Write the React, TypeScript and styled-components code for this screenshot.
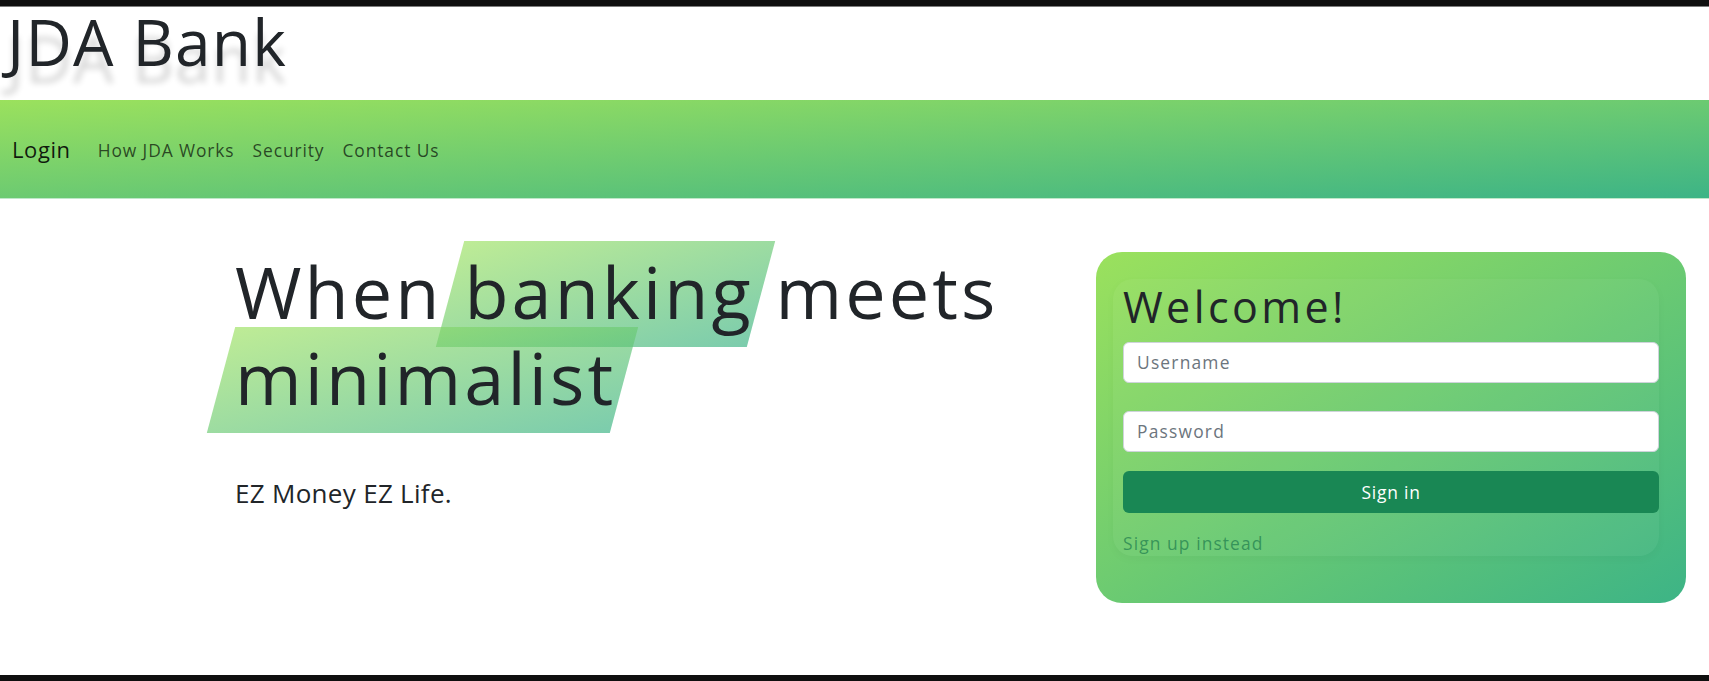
import React from "react";
import styled, { createGlobalStyle } from "styled-components";

const GlobalStyle = createGlobalStyle`
  html, body { margin: 0; padding: 0; background: #fff; }
  body {
    font-family: "Open Sans", "Noto Sans", sans-serif;
    color: #212529;
    -webkit-font-smoothing: antialiased;
  }
  *, *::before, *::after { box-sizing: border-box; }
`;

const BRAND_GRADIENT = "linear-gradient(to bottom right, #9be15d, #3db486)";

const Page = styled.div`
  display: flex;
  flex-direction: column;
  height: 681px;
  overflow: hidden;
  border-top: 6px solid #0f0f0f;
  border-bottom: 6px solid #0f0f0f;
`;

const Header = styled.header`
  height: 94px;
  border-top: 1px solid #7d7d7d;
  padding: 3px 0 0 7px;
  flex: 0 0 auto;
`;

const Title = styled.h1`
  margin: 0;
  font-size: 64px;
  font-weight: 400;
  line-height: 1;
  letter-spacing: 1.2px;
  color: #212529;
  text-shadow: 0 17px 6px rgba(0, 0, 0, 0.16);
`;

const NavBar = styled.nav`
  flex: 0 0 auto;
  height: 99px;
  display: flex;
  align-items: center;
  padding: 0 0 0 12px;
  background: ${BRAND_GRADIENT};
  border-bottom: 1px solid #bfe8c9;
`;

const Brand = styled.a`
  font-size: 22px;
  letter-spacing: 0.6px;
  color: rgba(0, 0, 0, 0.88);
  text-decoration: none;
  margin-right: 27px;
  padding-bottom: 1px;
`;

const NavLinks = styled.div`
  display: flex;
  gap: 18px;
`;

const NavLink = styled.a`
  font-size: 17.4px;
  letter-spacing: 0.9px;
  color: rgba(0, 0, 0, 0.68);
  text-decoration: none;
  padding-top: 1px;
`;

const Main = styled.main`
  flex: 1 1 auto;
  display: flex;
  justify-content: space-between;
  align-items: flex-start;
  padding: 49px 23px 0 235px;
`;

const Hero = styled.section`
  flex: 0 0 auto;
`;

const Headline = styled.h2`
  position: relative;
  z-index: 0;
  margin: 0;
  font-size: 72px;
  font-weight: 400;
  line-height: 1.2;
  letter-spacing: 3.1px;
  white-space: nowrap;
  color: #212529;
`;

const Mark = styled.span<{ $left: number; $right: number }>`
  position: relative;
  &::before {
    content: "";
    position: absolute;
    left: ${(p) => -p.$left}px;
    right: ${(p) => -p.$right}px;
    top: -1px;
    bottom: -7px;
    transform: skewX(-15deg);
    background: linear-gradient(
      to bottom right,
      rgba(155, 225, 93, 0.65),
      rgba(61, 180, 134, 0.68)
    );
    z-index: -1;
  }
`;

const Lead = styled.p`
  margin: 53px 0 0;
  font-size: 26px;
  line-height: 1.5;
  font-weight: 400;
  letter-spacing: 0.3px;
  color: #212529;
`;

const Card = styled.section`
  flex: 0 0 auto;
  width: 590px;
  height: 351px;
  margin-top: 4px;
  border-radius: 26px;
  background: ${BRAND_GRADIENT};
  padding: 27px 27px 0 17px;
`;

const CardBody = styled.form`
  display: flex;
  flex-direction: column;
  padding: 0 0 0 10px;
  border-radius: 20px;
  background: rgba(255, 255, 255, 0.04);
  box-shadow: 0 3px 10px rgba(0, 0, 0, 0.03);
`;

const CardTitle = styled.h3`
  margin: 2px 0 9px;
  font-size: 43px;
  font-weight: 400;
  line-height: 1.2;
  letter-spacing: 3.4px;
  color: #212529;
`;

const Input = styled.input<{ $gap: number }>`
  display: block;
  width: 100%;
  height: 41px;
  margin: 0 0 ${(p) => p.$gap}px;
  padding: 0 13px;
  font-family: inherit;
  font-size: 17.4px;
  letter-spacing: 1.2px;
  color: #212529;
  background: #fff;
  border: 1px solid #ced4da;
  border-radius: 6px;
  outline: none;
  &::placeholder {
    color: #6c757d;
    opacity: 1;
  }
`;

const SubmitButton = styled.button`
  display: block;
  width: 100%;
  height: 42px;
  border: 0;
  border-radius: 6px;
  background: #198754;
  color: #fff;
  font-family: inherit;
  font-size: 17.4px;
  letter-spacing: 0.8px;
  cursor: pointer;
`;

const SignUpLink = styled.a`
  display: block;
  margin-top: 17px;
  font-size: 17.4px;
  letter-spacing: 1.1px;
  line-height: 1.5;
  color: rgba(25, 120, 75, 0.68);
  text-decoration: none;
`;

export default function App() {
  return (
    <>
      <GlobalStyle />
      <Page>
        <Header>
          <Title>JDA Bank</Title>
        </Header>
        <NavBar>
          <Brand href="#">Login</Brand>
          <NavLinks>
            <NavLink href="#">How JDA Works</NavLink>
            <NavLink href="#">Security</NavLink>
            <NavLink href="#">Contact Us</NavLink>
          </NavLinks>
        </NavBar>
        <Main>
          <Hero>
            <Headline>
              When <Mark $left={14} $right={8}>banking</Mark> meets
              <br />
              <Mark $left={14} $right={8}>minimalist</Mark>
            </Headline>
            <Lead>EZ Money EZ Life.</Lead>
          </Hero>
          <Card>
            <CardBody onSubmit={(e) => e.preventDefault()}>
              <CardTitle>Welcome!</CardTitle>
              <Input $gap={28} type="text" placeholder="Username" />
              <Input $gap={19} type="password" placeholder="Password" />
              <SubmitButton type="submit">Sign in</SubmitButton>
              <SignUpLink href="#">Sign up instead</SignUpLink>
            </CardBody>
          </Card>
        </Main>
      </Page>
    </>
  );
}
